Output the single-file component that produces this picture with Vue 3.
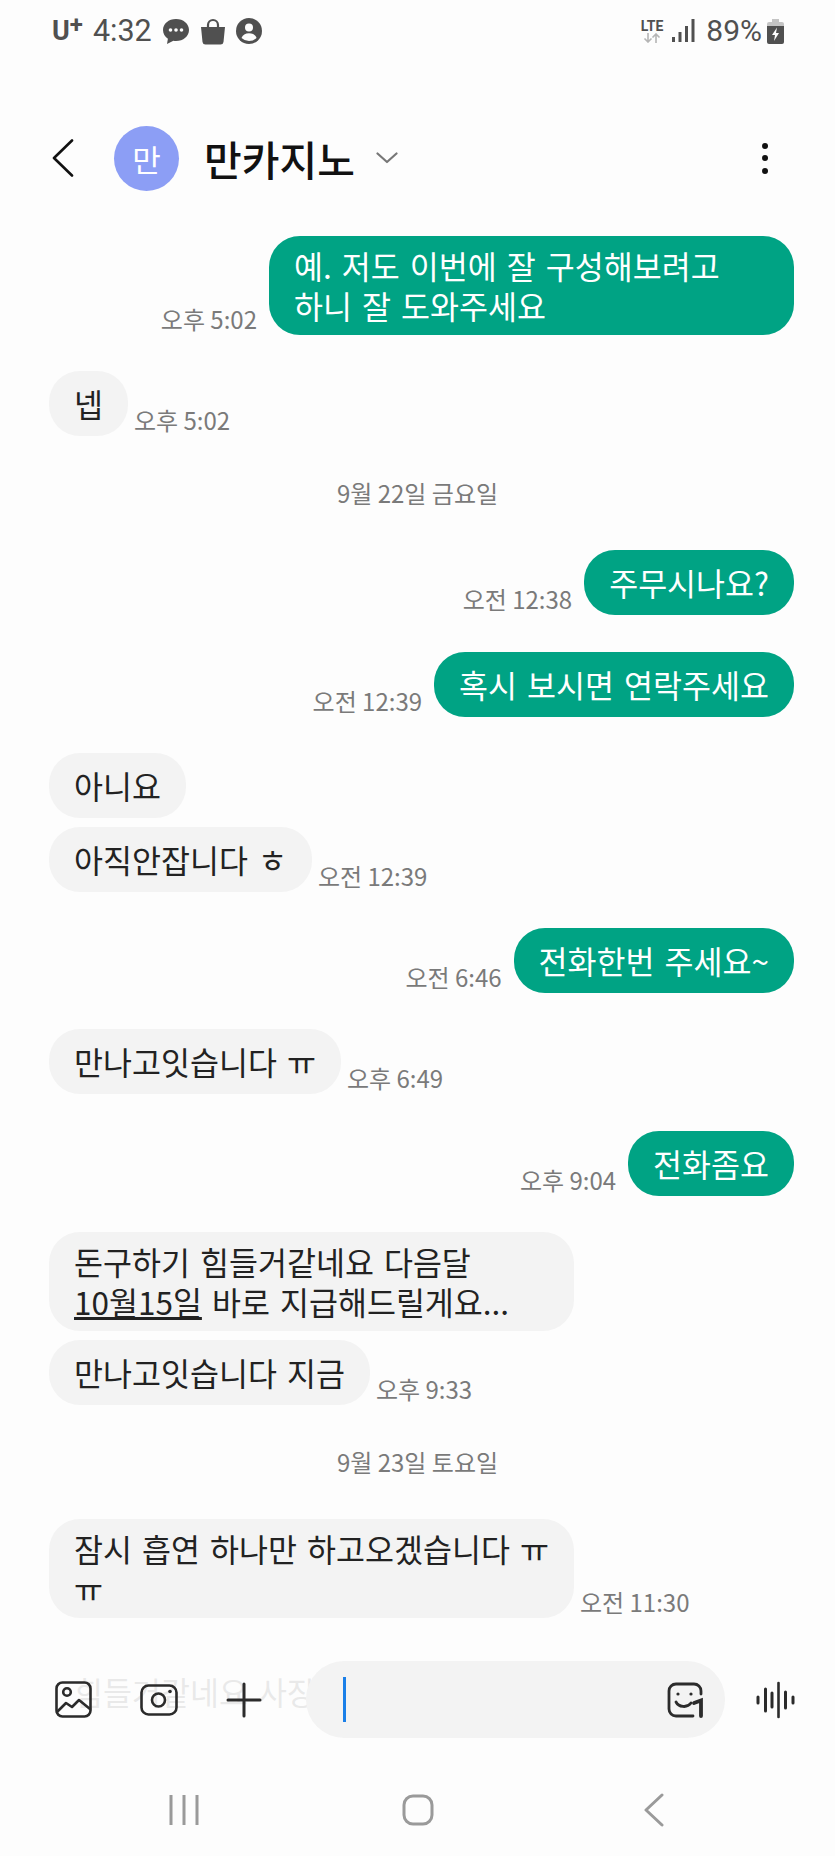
<template>
  <div class="phone">
    <!-- Status bar -->
    <div class="status">
      <div class="status-left">
        <span class="carrier">U<sup>+</sup></span>
        <span class="clock">4:32</span>
        <svg class="st-icon" width="28" height="27" viewBox="0 0 28 27">
          <path d="M14 1C6.600 1 1 5.800 1 12c0 3.600 1.900 6.700 4.900 8.700L5 26l6.400-3.300c.8.200 1.700.3 2.600.3 7.400 0 13-4.800 13-11S21.400 1 14 1z" fill="#505050" />
          <circle cx="8.500" cy="12" r="1.800" fill="#fdfdfd" />
          <circle cx="14" cy="12" r="1.800" fill="#fdfdfd" />
          <circle cx="19.500" cy="12" r="1.800" fill="#fdfdfd" />
        </svg>
        <svg class="st-icon" width="26" height="27" viewBox="0 0 26 27">
          <path d="M8 10V7a5 5 0 0 1 10 0v3" fill="none" stroke="#505050" stroke-width="2.200" />
          <path d="M1 9h24l-1.500 15a3 3 0 0 1-3 2.500h-15a3 3 0 0 1-3-2.500z" fill="#505050" />
        </svg>
        <svg class="st-icon" width="26" height="26" viewBox="0 0 26 26">
          <circle cx="13" cy="13" r="13" fill="#505050" />
          <circle cx="13" cy="9.500" r="4" fill="#fdfdfd" />
          <path d="M5.500 20c1-3.300 4-4.800 7.500-4.800s6.500 1.500 7.500 4.800a11 11 0 0 1-15 0z" fill="#fdfdfd" />
        </svg>
      </div>
      <div class="status-right">
        <div class="lte">
          <span>LTE</span>
          <svg width="18" height="10" viewBox="0 0 18 10">
            <path d="M5 0v9M1.500 5.500 5 9l3.500-3.500M13 10V1M9.500 4.500 13 1l3.500 3.500" fill="none" stroke="#b5b5b5" stroke-width="1.600" />
          </svg>
        </div>
        <svg class="signal" width="23" height="24" viewBox="0 0 23 24">
          <rect x="0" y="18" width="3" height="5" fill="#505050" />
          <rect x="6.500" y="13" width="3" height="10" fill="#505050" />
          <rect x="13" y="7" width="3" height="16" fill="#505050" />
          <rect x="19.500" y="0" width="3" height="23" fill="#505050" />
        </svg>
        <span class="battery-pct">89%</span>
        <svg width="17" height="25" viewBox="0 0 17 25">
          <path d="M5 0h7v3h3a2 2 0 0 1 2 2v5H0V5a2 2 0 0 1 2-2h3z" fill="#c4c4c4" />
          <path d="M0 7h17v16a2 2 0 0 1-2 2H2a2 2 0 0 1-2-2z" fill="#505050" />
          <path d="M10 8.500 5 16h3l-1 6 5-8H9z" fill="#fdfdfd" />
        </svg>
      </div>
    </div>

    <!-- Conversation header -->
    <div class="header">
      <svg class="back" width="22" height="38" viewBox="0 0 22 38">
        <path d="M20 1.500 2 19l18 17.500" fill="none" stroke="#111" stroke-width="2.600" stroke-linecap="round" stroke-linejoin="round" />
      </svg>
      <div class="avatar">만</div>
      <div class="title">만카지노</div>
      <svg width="22" height="12" viewBox="0 0 22 12">
        <path d="M1.500 1.500 11 10l9.500-8.500" fill="none" stroke="#777" stroke-width="2.200" stroke-linecap="round" stroke-linejoin="round" />
      </svg>
      <div class="more"><i></i><i></i><i></i></div>
    </div>

    <!-- Messages -->
    <div class="chat">
      <template v-for="(m, index) in messages" :key="index">
        <div v-if="m.date" class="date">{{ m.date }}</div>
        <div v-else class="row" :class="[m.mine ? 'mine' : 'theirs', { tight: m.tight, first: index === 0 }]">
          <div class="bubble" :class="{ wide: m.wide, ghost: m.ghost }">
            <div v-if="m.before">{{ m.before }}</div>
            <u v-if="m.link">{{ m.link }}</u><span>{{ m.text }}</span>
          </div>
          <span v-if="m.time" class="time">{{ m.time }}</span>
        </div>
      </template>
    </div>

    <!-- Composer lies over the last message -->
    <div class="composer">
      <div class="input-row">
        <button class="tool">
          <svg width="37" height="37" viewBox="0 0 37 37" fill="none" stroke="#2b2b2b" stroke-width="2.600" stroke-linejoin="round" stroke-linecap="round">
            <rect x="1.500" y="1.500" width="34" height="34" rx="6" />
            <circle cx="12" cy="11" r="3.800" />
            <path d="M2 31l9-9 6 4 7-7 11 9" />
          </svg>
        </button>
        <button class="tool">
          <svg width="38" height="32" viewBox="0 0 38 32" fill="none" stroke="#2b2b2b" stroke-width="2.600">
            <rect x="1.500" y="1.500" width="35" height="29" rx="7" />
            <circle cx="18.500" cy="16" r="6.500" />
            <circle cx="30" cy="7.500" r="1.800" fill="#2b2b2b" stroke="none" />
          </svg>
        </button>
        <button class="tool">
          <svg width="36" height="36" viewBox="0 0 36 36" fill="none" stroke="#2b2b2b" stroke-width="3" stroke-linecap="round">
            <path d="M18 2v32M2 18h32" />
          </svg>
        </button>
        <div class="input">
          <span class="cursor"></span>
          <svg width="37" height="36" viewBox="0 0 37 36" fill="none" stroke="#2b2b2b" stroke-width="2.800" stroke-linecap="round">
            <path d="M34 12V9a7 7 0 0 0-7-7H9a7 7 0 0 0-7 7v18a7 7 0 0 0 7 7h17" />
            <path d="M9 20c2.500 5 11 6.500 15 1" />
            <path d="M27 21l7-2.500V34" stroke-width="3.800" />
            <circle cx="11" cy="12" r="1.600" fill="#2b2b2b" stroke="none" />
            <circle cx="24" cy="12" r="1.600" fill="#2b2b2b" stroke="none" />
          </svg>
        </div>
        <button class="tool voice">
          <svg width="40" height="38" viewBox="0 0 40 38" fill="none" stroke="#2b2b2b" stroke-linecap="round">
            <path d="M2 16v6" stroke-width="3" />
            <path d="M9.500 8v22" stroke-width="3" />
            <path d="M16 12v14" stroke-width="3" />
            <path d="M22.500 2v34" stroke-width="2.600" />
            <path d="M29.500 11v16" stroke-width="3" />
            <path d="M37 16v6" stroke-width="3" />
          </svg>
        </button>
      </div>

      <!-- Android navigation -->
      <div class="nav">
        <svg width="30" height="32" viewBox="0 0 30 32" fill="none" stroke="#9a9a9a" stroke-width="3">
          <path d="M2 1v30M15 1v30M28 1v30" />
        </svg>
        <svg width="32" height="32" viewBox="0 0 32 32" fill="none" stroke="#9a9a9a" stroke-width="3">
          <rect x="2" y="2" width="28" height="28" rx="9" />
        </svg>
        <svg class="nav-back" width="20" height="34" viewBox="0 0 20 34" fill="none" stroke="#9a9a9a" stroke-width="3" stroke-linecap="round" stroke-linejoin="round">
          <path d="M18 2 2 17l16 15" />
        </svg>
      </div>
    </div>
  </div>
</template>

<script setup>
import { ref } from "vue";

// Conversation, top to bottom
const messages = ref([
  { mine: true, wide: true, time: "오후 5:02", before: "예. 저도 이번에 잘 구성해보려고", text: "하니 잘 도와주세요" },
  { time: "오후 5:02", text: "넵" },
  { date: "9월 22일 금요일" },
  { mine: true, time: "오전 12:38", text: "주무시나요?" },
  { mine: true, time: "오전 12:39", text: "혹시 보시면 연락주세요" },
  { text: "아니요" },
  { tight: true, time: "오전 12:39", text: "아직안잡니다 ㅎ" },
  { mine: true, time: "오전 6:46", text: "전화한번 주세요~" },
  { time: "오후 6:49", text: "만나고잇습니다 ㅠ" },
  { mine: true, time: "오후 9:04", text: "전화좀요" },
  { wide: true, before: "돈구하기 힘들거같네요 다음달", link: "10월15일", text: " 바로 지급해드릴게요..." },
  { tight: true, time: "오후 9:33", text: "만나고잇습니다 지금" },
  { date: "9월 23일 토요일" },
  { wide: true, time: "오전 11:30", before: "잠시 흡연 하나만 하고오겠습니다 ㅠ", text: "ㅠ" },
  { ghost: true, text: "힘들거같네요 사장님" },
]);
</script>

<style>
html,
body {
  margin: 0;
  background: #fdfdfd;
}
</style>

<style scoped>
.phone {
  position: relative;
  width: 835px;
  height: 1856px;
  overflow: hidden;
  background: #fdfdfd;
  font-family: "Noto Sans CJK KR", "Noto Sans", sans-serif;
  color: #222;
}
.status {
  display: flex;
  justify-content: space-between;
  align-items: center;
  height: 62px;
  padding: 0 51px 0 52px;
  color: #505050;
}
.status-left,
.status-right {
  display: flex;
  align-items: center;
}
.carrier {
  font: 700 27px/1 Roboto, sans-serif;
}
.carrier sup {
  font-size: 24px;
  line-height: 0;
  vertical-align: 7px;
}
.clock {
  margin: 0 10px 0 10px;
  font: 400 30.500px/1 Roboto, sans-serif;
}
.st-icon {
  margin-right: 10px;
}
.lte {
  display: flex;
  flex-direction: column;
  align-items: center;
  margin-right: 9px;
  font: 700 14px/14px Roboto, sans-serif;
}
.signal {
  margin-right: 11px;
}
.battery-pct {
  margin-right: 5px;
  font: 400 30px/1 Roboto, sans-serif;
}
.header {
  display: flex;
  align-items: center;
  height: 64px;
  margin-top: 64px;
  padding: 0 67px 0 52px;
}
.back {
  margin-right: 40px;
}
.avatar {
  display: flex;
  align-items: center;
  justify-content: center;
  width: 65px;
  height: 65px;
  border-radius: 50%;
  background: #8c9ef5;
  color: #fff;
  font-size: 31px;
  line-height: 1;
}
.title {
  margin: 0 21px 0 25px;
  color: #111;
  font-size: 41px;
  font-weight: 500;
  line-height: 1;
}
.more {
  display: flex;
  flex-direction: column;
  gap: 6.500px;
  margin-left: auto;
}
.more i {
  width: 6px;
  height: 6px;
  border-radius: 50%;
  background: #111;
}
.chat {
  display: flex;
  flex-direction: column;
  padding: 46px 41px 0 49px;
}
.row {
  display: flex;
  align-items: flex-end;
  margin-top: 36.400px;
}
.row.first,
.date + .row {
  margin-top: 0;
}
.row.tight {
  margin-top: 8.500px;
}
.row.mine {
  flex-direction: row-reverse;
}
.bubble {
  padding: 12px 25px 13px;
  border-radius: 31px;
  background: #f3f3f3;
  color: #222;
  font-size: 31.500px;
  line-height: 40px;
  word-spacing: 3px;
}
.bubble.wide {
  box-sizing: border-box;
  width: 525px;
  padding: 9px 25px 10px;
}
.mine .bubble {
  background: #00a384;
  color: #fff;
}
.bubble.ghost {
  margin-top: 5px;
  background: transparent;
}
.time {
  margin: 0 0 1px 6px;
  color: #7a7a7a;
  font-size: 24px;
  line-height: 30px;
}
.mine .time {
  margin: 0 12px 1px 0;
}
.date {
  height: 114px;
  margin-right: 8px;
  color: #7a7a7a;
  font-size: 24px;
  line-height: 114px;
  text-align: center;
}
.composer {
  position: absolute;
  left: 0;
  right: 0;
  bottom: 0;
  height: 216px;
  background: rgba(253, 253, 253, 0.91);
}
.input-row {
  display: flex;
  align-items: center;
  height: 77px;
  margin-top: 21px;
  padding-left: 31px;
}
.tool {
  display: flex;
  align-items: center;
  justify-content: center;
  width: 85px;
  height: 77px;
  padding: 0;
  border: none;
  background: none;
}
.input {
  display: flex;
  align-items: center;
  justify-content: space-between;
  box-sizing: border-box;
  width: 419px;
  height: 77px;
  margin-left: 20px;
  padding: 0 21px 0 37px;
  border-radius: 38px;
  background: #f3f3f3;
}
.cursor {
  width: 2.500px;
  height: 45px;
  background: #1a7fe8;
}
.voice {
  width: 102px;
}
.nav {
  display: flex;
  align-items: center;
  gap: 203px;
  height: 34px;
  margin-top: 55px;
  padding-left: 169px;
}
.nav-back {
  margin-left: 7px;
}
</style>
